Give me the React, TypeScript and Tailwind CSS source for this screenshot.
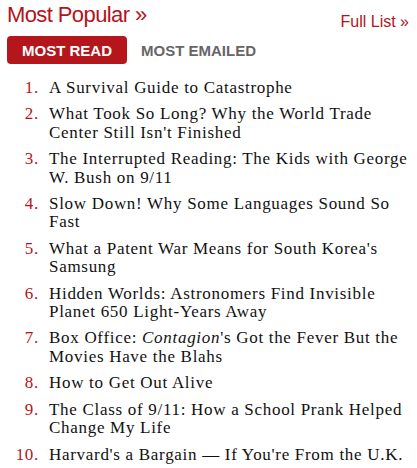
import React from "react";

const items: React.ReactNode[][] = [
  ["A Survival Guide to Catastrophe"],
  ["What Took So Long? Why the World Trade", "Center Still Isn't Finished"],
  ["The Interrupted Reading: The Kids with George", "W. Bush on 9/11"],
  ["Slow Down! Why Some Languages Sound So", "Fast"],
  ["What a Patent War Means for South Korea's", "Samsung"],
  ["Hidden Worlds: Astronomers Find Invisible", "Planet 650 Light-Years Away"],
  [
    <>
      Box Office: <i>Contagion</i>'s Got the Fever But the
    </>,
    "Movies Have the Blahs",
  ],
  ["How to Get Out Alive"],
  ["The Class of 9/11: How a School Prank Helped", "Change My Life"],
  ["Harvard's a Bargain — If You're From the U.K."],
];

export default function App() {
  return (
    <div className="w-[417px] h-[468px] bg-white pl-[7px] pr-[8px] overflow-hidden [font-family:'Liberation_Sans',Arial,sans-serif]">
      <div className="flex justify-between items-start pt-[4px]">
        <div className="text-[22px] leading-[22px] tracking-[-0.6px] text-[#b3141c]">
          Most Popular »
        </div>
        <div className="mt-[10px] text-[16px] leading-[15px] text-[#b3141c]">
          Full List »
        </div>
      </div>
      <div className="flex mt-[7px] font-bold text-[15px]">
        <div className="h-[28px] leading-[30px] px-[15px] rounded-[4px] bg-[#b5161b] text-white">
          MOST READ
        </div>
        <div className="h-[28px] leading-[30px] px-[15px] ml-[-1px] text-[#666666]">
          MOST EMAILED
        </div>
      </div>
      <ol className="mt-[15px] flex flex-col gap-[8px] [font-family:'Liberation_Serif',serif] text-[17px] tracking-[0.7px] leading-[18.4px]">
        {items.map((lines, i) => (
          <li key={i} className="flex">
            <span className="w-[32px] shrink-0 text-right text-[#b3141c]">{i + 1}.</span>
            <span className="ml-[10px] whitespace-nowrap text-[#111111]">
              {lines.map((l, j) => (
                <React.Fragment key={j}>
                  {j > 0 && <br />}
                  {l}
                </React.Fragment>
              ))}
            </span>
          </li>
        ))}
      </ol>
    </div>
  );
}
